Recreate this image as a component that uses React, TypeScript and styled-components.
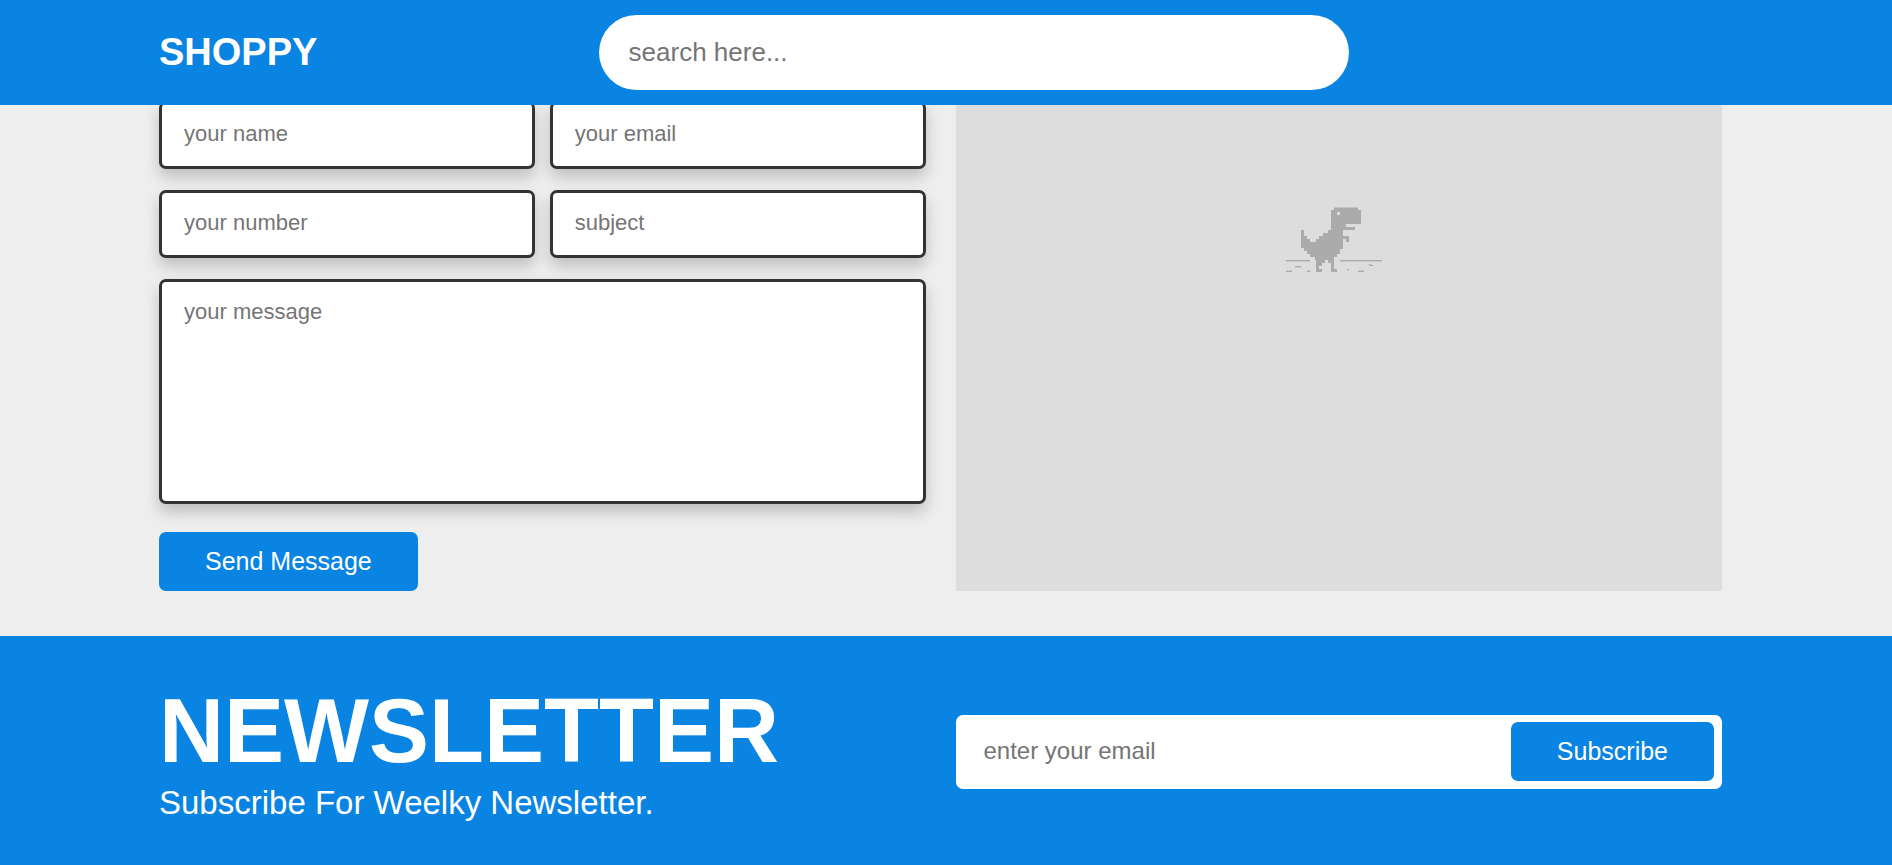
import React from "react";
import styled, { createGlobalStyle } from "styled-components";

const BLUE = "#0984e3";

const GlobalStyle = createGlobalStyle`
  *, *::before, *::after {
    box-sizing: border-box;
    margin: 0;
    padding: 0;
  }
  body {
    background: #eee;
    font-family: Arial, "Liberation Sans", sans-serif;
    color: #333;
  }
  input, textarea, button {
    font-family: inherit;
    border: none;
    outline: none;
  }
  ::placeholder {
    color: #757575;
    opacity: 1;
  }
`;

const Header = styled.header`
  position: fixed;
  top: 0;
  left: 0;
  right: 0;
  z-index: 10;
  display: flex;
  align-items: center;
  justify-content: space-between;
  padding: 15px 170px 15px 159px;
  background: ${BLUE};
`;

const Logo = styled.a`
  padding-bottom: 2px;
  font-size: 38px;
  line-height: 44px;
  font-weight: bold;
  color: #fff;
  text-decoration: none;
`;

const SearchBox = styled.form`
  flex: 0 0 48%;
  display: flex;
  height: 75px;
  border-radius: 38px;
  background: #fff;
  overflow: hidden;
`;

const SearchInput = styled.input`
  flex: 1;
  min-width: 0;
  padding: 0 30px;
  font-size: 26px;
  background: none;
`;

const HeaderEnd = styled.div`
  width: 92px;
`;

const Columns = styled.section`
  display: grid;
  grid-template-columns: 1fr 1fr;
  gap: 30px;
`;

const Contact = styled(Columns)`
  padding: 101px 170px 45px 159px;
`;

const ContactForm = styled.form`
  display: flex;
  flex-direction: column;
  align-items: flex-start;
`;

const Fields = styled.div`
  align-self: stretch;
  display: grid;
  grid-template-columns: 1fr 1fr;
  gap: 21px 15px;
  margin-bottom: 28px;
`;

const Field = styled.input`
  width: 100%;
  height: 68px;
  padding: 0 22px 2px;
  font-size: 22px;
  background: #fff;
  border: 3px solid #333;
  border-radius: 7px;
  box-shadow: 0 8px 15px rgba(0, 0, 0, 0.2);
`;

const Message = styled(Field).attrs({ as: "textarea" })`
  grid-column: 1 / -1;
  display: block;
  height: 225px;
  padding: 17px 22px;
  line-height: 26px;
  resize: none;
`;

const Button = styled.button`
  padding: 15px 46px;
  font-size: 25px;
  line-height: 29px;
  color: #fff;
  background: ${BLUE};
  border-radius: 7px;
  cursor: pointer;
`;

const MapPanel = styled.div`
  display: flex;
  justify-content: center;
  align-items: flex-start;
  padding-top: 95px;
  background: #ddd;
`;

const Newsletter = styled(Columns)`
  align-items: center;
  padding: 45px 170px 45px 159px;
  background: ${BLUE};
  color: #fff;
`;

const Title = styled.h1`
  margin-bottom: 2px;
  font-size: 90px;
  line-height: 101px;
  font-weight: bold;
`;

const Subtitle = styled.p`
  font-size: 33px;
  line-height: 38px;
`;

const SubscribeForm = styled.form`
  display: flex;
  align-items: center;
  padding: 7px 8px 8px 0;
  background: #fff;
  border-radius: 7px;
`;

const EmailInput = styled.input`
  flex: 1;
  min-width: 0;
  padding: 0 28px;
  font-size: 24px;
  background: none;
`;

const Dino = () => (
  <svg
    width="126"
    height="84"
    viewBox="0 0 378 252"
    fill="#ababab"
    shapeRendering="crispEdges"
    aria-hidden="true"
  >
    <path
      fillRule="evenodd"
      d="M174 36H246V43H255V84H210V93H237V102H201V120H219V138H210V129H201V160H192V174H183V183H174V219H183V228H165V201H156V192H147V201H138V210H129V219H138V228H120V192H117V183H102V174H93V165H84V156H75V102H84V120H93V129H102V138H120V129H129V120H141V111H156V102H165V43H174ZM183 48V57H192V48Z"
    />
    <path fill="#c5c5c5" d="M174 33H246V36H174Z" />
    <path d="M30 192H102V195H30ZM192 192H318V195H192ZM57 210H75V213H57ZM30 225H48V228H30ZM93 225H102V228H93ZM246 225H264V228H246ZM279 207H291V210H279ZM213 219H219V222H213Z" />
    <path
      fill="#c8c8c8"
      d="M30 195H102V198H30ZM192 195H318V198H192ZM57 213H75V216H57ZM30 222H48V225H30ZM93 222H102V225H93ZM246 222H264V225H246ZM276 204H288V207H276ZM216 222H219V225H216Z"
    />
  </svg>
);

const fields = [
  { type: "text", label: "your name" },
  { type: "email", label: "your email" },
  { type: "tel", label: "your number" },
  { type: "text", label: "subject" },
];

const stay = (e: React.FormEvent) => e.preventDefault();

export default function App() {
  return (
    <>
      <GlobalStyle />
      <Header>
        <Logo href="#">SHOPPY</Logo>
        <SearchBox onSubmit={stay}>
          <SearchInput type="search" placeholder="search here..." aria-label="search here" />
        </SearchBox>
        <HeaderEnd />
      </Header>
      <main>
        <Contact>
          <ContactForm onSubmit={stay}>
            <Fields>
              {fields.map(({ type, label }) => (
                <Field key={label} type={type} placeholder={label} aria-label={label} />
              ))}
              <Message placeholder="your message" aria-label="your message" />
            </Fields>
            <Button type="submit">Send Message</Button>
          </ContactForm>
          <MapPanel>
            <Dino />
          </MapPanel>
        </Contact>
        <Newsletter>
          <div>
            <Title>NEWSLETTER</Title>
            <Subtitle>Subscribe For Weelky Newsletter.</Subtitle>
          </div>
          <SubscribeForm onSubmit={stay}>
            <EmailInput type="email" placeholder="enter your email" aria-label="enter your email" />
            <Button type="submit">Subscribe</Button>
          </SubscribeForm>
        </Newsletter>
      </main>
    </>
  );
}
